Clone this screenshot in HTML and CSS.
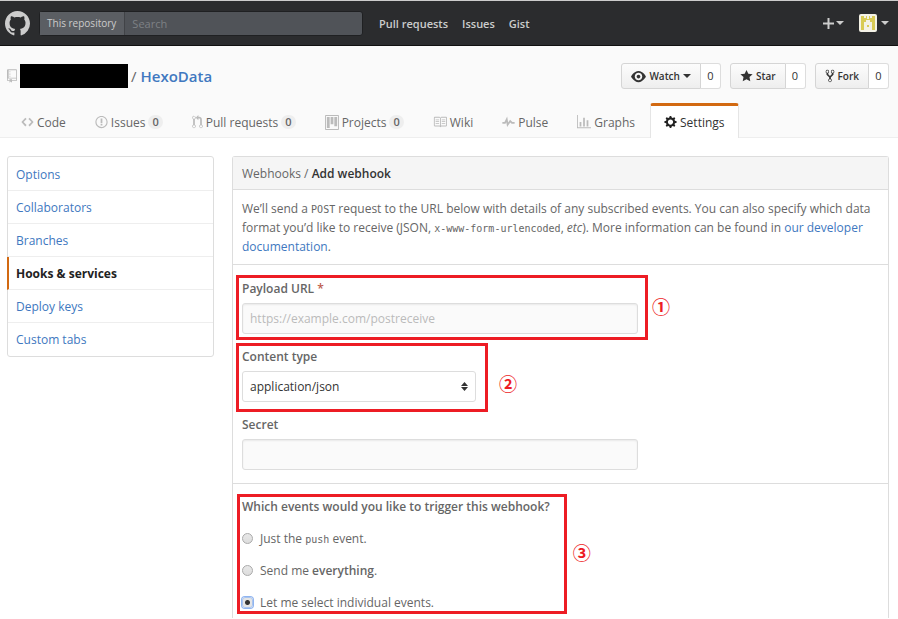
FILE: index.html
```html
<!DOCTYPE html>
<html lang="en">
<head>
<meta charset="utf-8">
<meta name="viewport" content="width=device-width, initial-scale=1">
<title>Add webhook</title>
<link rel="stylesheet" href="styles.css">
</head>
<body>
<header class="topbar">
  <a class="logo" href="#" aria-label="Homepage"><svg width="25" height="25" viewBox="0 0 16 16"><path d="M8 0C3.58 0 0 3.58 0 8c0 3.54 2.29 6.53 5.47 7.59.4.07.55-.17.55-.38 0-.19-.01-.82-.01-1.49-2.01.37-2.53-.49-2.69-.94-.09-.23-.48-.94-.82-1.13-.28-.15-.68-.52-.01-.53.63-.01 1.08.58 1.23.82.72 1.21 1.87.87 2.33.66.07-.52.28-.87.51-1.07-1.78-.2-3.64-.89-3.64-3.95 0-.87.31-1.59.82-2.15-.08-.2-.36-1.02.08-2.12 0 0 .67-.21 2.2.82.64-.18 1.32-.27 2-.27s1.36.09 2 .27c1.53-1.04 2.2-.82 2.2-.82.44 1.1.16 1.92.08 2.12.51.56.82 1.27.82 2.15 0 3.07-1.87 3.75-3.65 3.95.29.25.54.73.54 1.48 0 1.07-.01 1.93-.01 2.2 0 .21.15.46.55.38A8.01 8.01 0 0 0 16 8c0-4.42-3.58-8-8-8z"/></svg></a>
  <form class="search">
    <label for="q">This repository</label>
    <input id="q" type="text" placeholder="Search">
  </form>
  <nav class="topnav">
    <a href="#">Pull requests</a>
    <a href="#">Issues</a>
    <a href="#">Gist</a>
  </nav>
  <div class="usernav">
    <button type="button" aria-label="Create new"><svg width="11" height="11" viewBox="0 0 11 11"><path d="M4.500 0h2v4.500H11v2H6.500V11h-2V6.500H0v-2h4.500z"/></svg><span class="caret"></span></button>
    <button type="button" class="account" aria-label="Account"><svg width="18" height="18" viewBox="0 0 18 18"><rect width="18" height="18" rx="2" fill="#f4f2e6"/><path fill="#d9cb55" d="M2 2h3v2h2V2h1v3h2V2h1v2h2V2h3v14h-3V8h-2V6H7v2H5v8H2zM8 11h2v2H8z"/></svg><span class="caret"></span></button>
  </div>
</header>

<div class="pagehead">
  <div class="repo-row">
    <h1 class="repo">
      <svg width="10" height="14" viewBox="0 0 12 16"><path d="M4 9H3V8h1v1zm0-3H3v1h1V6zm0-2H3v1h1V4zm0-2H3v1h1V2zm8-1v12c0 .55-.45 1-1 1H6v2l-1.500-1.500L3 16v-2H1c-.55 0-1-.45-1-1V1c0-.55.45-1 1-1h10c.55 0 1 .45 1 1zm-1 10H1v2h2v-1h3v1h5v-2zm0-10H2v9h9V1z"/></svg>
      <span class="owner"></span>
      <span class="slash">/</span>
      <a href="#">HexoData</a>
    </h1>
    <div class="actions">
      <div class="pair"><button type="button"><svg width="15" height="15" viewBox="0 0 16 16"><path d="M8.060 2C3 2 0 8 0 8s3 6 8.060 6C13 14 16 8 16 8s-3-6-7.940-6zM8 12c-2.200 0-4-1.780-4-4 0-2.200 1.800-4 4-4 2.220 0 4 1.800 4 4 0 2.220-1.780 4-4 4zm2-4c0 1.110-.89 2-2 2-1.110 0-2-.89-2-2 0-1.110.89-2 2-2 1.110 0 2 .89 2 2z"/></svg>Watch<span class="caret"></span></button><a href="#">0</a></div>
      <div class="pair"><button type="button"><svg width="13" height="14" viewBox="0 0 14 16"><path d="M14 6l-4.900-.64L7 1 4.900 5.360 0 6l3.600 3.260L2.670 14 7 11.670 11.330 14l-.93-4.740z"/></svg>Star</button><a href="#">0</a></div>
      <div class="pair"><button type="button"><svg width="10" height="14" viewBox="0 0 10 16"><path d="M8 1a1.993 1.993 0 0 0-1 3.720V6L5 8 3 6V4.720A1.993 1.993 0 0 0 2 1a1.993 1.993 0 0 0-1 3.720V6.500l3 3v1.780A1.993 1.993 0 0 0 5 15a1.993 1.993 0 0 0 1-3.720V9.500l3-3V4.720A1.993 1.993 0 0 0 8 1zM2 4.200C1.340 4.200.8 3.650.8 3c0-.65.55-1.200 1.200-1.200.65 0 1.200.55 1.200 1.200 0 .65-.55 1.200-1.200 1.200zm3 10c-.66 0-1.200-.55-1.200-1.200 0-.65.55-1.200 1.200-1.200.65 0 1.200.55 1.200 1.200 0 .65-.55 1.200-1.200 1.200zm3-10c-.66 0-1.200-.55-1.200-1.200 0-.65.55-1.200 1.200-1.200.65 0 1.200.55 1.200 1.200 0 .65-.55 1.200-1.200 1.200z"/></svg>Fork</button><a href="#">0</a></div>
    </div>
  </div>
  <nav class="tabs">
    <a href="#"><svg width="13" height="14" viewBox="0 0 14 16"><path d="M9.500 3L8 4.500 11.500 8 8 11.500 9.500 13 14 8 9.500 3zm-5 0L0 8l4.500 5L6 11.500 2.500 8 6 4.500 4.500 3z"/></svg>Code</a>
    <a href="#"><svg width="13" height="14" viewBox="0 0 14 16"><path d="M7 2.300c3.140 0 5.700 2.560 5.700 5.700s-2.560 5.700-5.700 5.700A5.710 5.710 0 0 1 1.300 8c0-3.140 2.560-5.700 5.700-5.700zM7 1C3.140 1 0 4.140 0 8s3.140 7 7 7 7-3.140 7-7-3.140-7-7-7zm1 3H6v5h2V4zm0 6H6v2h2v-2z"/></svg>Issues<span class="count">0</span></a>
    <a href="#"><svg width="11" height="14" viewBox="0 0 12 16"><path d="M11 11.280V5c-.03-.78-.34-1.470-.94-2.060C9.460 2.350 8.780 2.030 8 2H7V0L4 3l3 3V4h1c.27.02.48.11.69.31.21.2.3.42.31.69v6.280A1.993 1.993 0 0 0 10 15a1.993 1.993 0 0 0 1-3.720zm-1 2.920c-.66 0-1.200-.55-1.200-1.200 0-.65.55-1.200 1.200-1.200.65 0 1.200.55 1.200 1.200 0 .65-.55 1.200-1.200 1.200zM4 3c0-1.110-.89-2-2-2a1.993 1.993 0 0 0-1 3.720v6.560A1.993 1.993 0 0 0 2 15a1.993 1.993 0 0 0 1-3.720V4.720c.59-.34 1-.98 1-1.720zm-.8 10c0 .66-.55 1.200-1.200 1.200-.65 0-1.200-.55-1.200-1.200 0-.65.55-1.200 1.200-1.200.65 0 1.200.55 1.200 1.200zM2 4.200C1.340 4.200.8 3.650.8 3c0-.65.55-1.200 1.200-1.200.65 0 1.200.55 1.200 1.200 0 .65-.55 1.200-1.200 1.200z"/></svg>Pull requests<span class="count">0</span></a>
    <a href="#"><svg width="14" height="15" viewBox="0 0 15 16"><path fill-rule="evenodd" d="M10 12h3V2h-3v10zm-4-2h3V2H6v8zm-4 4h3V2H2v12zm-1 1h13V1H1v14zM14 0H1a1 1 0 0 0-1 1v14a1 1 0 0 0 1 1h13a1 1 0 0 0 1-1V1a1 1 0 0 0-1-1z"/></svg>Projects<span class="count">0</span></a>
    <a href="#"><svg width="14" height="14" viewBox="0 0 16 16"><path d="M3 5h4v1H3V5zm0 3h4V7H3v1zm0 2h4V9H3v1zm11-5h-4v1h4V5zm0 2h-4v1h4V7zm0 2h-4v1h4V9zm2-6v9c0 .55-.45 1-1 1H9.500l-1 1-1-1H2c-.55 0-1-.45-1-1V3c0-.55.45-1 1-1h5.500l1 1 1-1H15c.55 0 1 .45 1 1zm-8 .5L7.500 3H2v9h6V3.500zm7-.5H9.500l-.5.500V12h6V3z"/></svg>Wiki</a>
    <a href="#"><svg width="13" height="14" viewBox="0 0 14 16"><path d="M11.500 8L8.800 5.400 6.600 8.500 5.500 1.600 2.380 8H0v2h3.600l.9-1.800.9 5.400L9 8.500l1.600 1.500H14V8z"/></svg>Pulse</a>
    <a href="#"><svg width="14" height="14" viewBox="0 0 16 16"><path d="M16 14v1H0V0h1v14h15zM5 13H3V8h2v5zm4 0H7V3h2v10zm4 0h-2V6h2v7z"/></svg>Graphs</a>
    <a href="#" class="selected" aria-current="page"><svg width="13" height="14" viewBox="0 0 14 16"><path d="M14 8.770v-1.600l-1.940-.64-.45-1.090.88-1.840-1.130-1.130-1.810.91-1.090-.45-.69-1.920h-1.600l-.63 1.940-1.110.45-1.840-.88-1.130 1.130.91 1.810-.45 1.090L0 7.230v1.590l1.940.64.45 1.090-.88 1.840 1.130 1.130 1.810-.91 1.090.45.69 1.920h1.590l.63-1.940 1.110-.45 1.840.88 1.130-1.130-.92-1.810.47-1.090L14 8.750v.02zM7 11c-1.660 0-3-1.340-3-3s1.340-3 3-3 3 1.340 3 3-1.340 3-3 3z"/></svg>Settings</a>
  </nav>
</div>

<div class="layout">
  <nav class="menu">
    <a href="#">Options</a>
    <a href="#">Collaborators</a>
    <a href="#">Branches</a>
    <a href="#" class="selected" aria-current="page">Hooks &amp; services</a>
    <a href="#">Deploy keys</a>
    <a href="#">Custom tabs</a>
  </nav>

  <main class="panel">
    <h2>Webhooks / <strong>Add webhook</strong></h2>
    <p class="intro">We’ll send a <code>POST</code> request to the URL below with details of any subscribed events. You can also specify which data format you’d like to receive (JSON, <code>x-www-form-urlencoded</code>, <em>etc</em>). More information can be found in <a href="#">our developer documentation</a>.</p>
    <form>
      <div class="fields">
        <div class="field">
          <label for="url">Payload URL <span class="required">*</span></label>
          <input id="url" type="text" placeholder="https://example.com/postreceive">
          <div class="callout"><span>①</span></div>
        </div>
        <div class="field short">
          <label for="type">Content type</label>
          <select id="type"><option>application/json</option></select>
          <div class="callout"><span>②</span></div>
        </div>
        <div class="field">
          <label for="secret">Secret</label>
          <input id="secret" type="text">
        </div>
      </div>
      <fieldset class="events">
        <legend>Which events would you like to trigger this webhook?</legend>
        <label><input type="radio" name="events"><span>Just the <code>push</code> event.</span></label>
        <label><input type="radio" name="events"><span>Send me <strong>everything</strong>.</span></label>
        <label><input type="radio" name="events" class="focused" checked><span>Let me select individual events.</span></label>
        <div class="callout"><span>③</span></div>
      </fieldset>
    </form>
  </main>
</div>
</body>
</html>
```

FILE: styles.css
```css
* {
  box-sizing: border-box;
}

body {
  margin: 0;
  background: #fff;
  color: #666;
  font: 12px/19px "Open Sans", "Noto Sans", sans-serif;
}

a {
  color: #4078c0;
  text-decoration: none;
}

button,
input,
select {
  font: inherit;
}

svg {
  display: block;
  flex: none;
  fill: currentColor;
}

code {
  font: 10px/12px "DejaVu Sans Mono", monospace;
}

strong {
  font-weight: 600;
}

.caret {
  border: 4px solid transparent;
  border-top-color: currentColor;
  border-bottom: 0;
}

/* Top bar */
.topbar {
  display: flex;
  align-items: center;
  height: 46px;
  padding: 0 9px 0 5px;
  border-top: 1px solid #ccc;
  border-bottom: 1px solid #111;
  background: #2b2c2e;
  color: #ccc;
}

.logo {
  color: #ccc;
}

.search {
  display: flex;
  flex: 0 1 324px;
  height: 25px;
  margin-left: 9px;
  border: 1px solid #1f2022;
  border-radius: 3px;
  background: #505358;
  line-height: 23px;
}

.search label {
  padding: 0 8px 0 7px;
  border-right: 1px solid #414347;
  background: #5b5e63;
  color: #ccc;
  font-size: 10px;
  white-space: nowrap;
}

.search input {
  flex: 1;
  min-width: 0;
  padding: 0 7px;
  border: 0;
  background: none;
  color: #ccc;
  font-size: 11px;
}

.search input::placeholder {
  color: #7e8185;
}

.topnav {
  display: flex;
  gap: 14px;
  margin-left: 16px;
}

.topnav a {
  color: #ccc;
  font-size: 11px;
  font-weight: 600;
}

.usernav {
  display: flex;
  gap: 15px;
  margin-left: auto;
}

.usernav button {
  display: flex;
  align-items: center;
  gap: 2px;
  padding: 0;
  border: 0;
  background: none;
  color: #ccc;
}

.usernav .account {
  gap: 4px;
}

/* Repository heading */
.pagehead {
  padding: 17px 9px 0 7px;
  border-bottom: 1px solid #eee;
  background: #fafafa;
}

.repo-row {
  display: flex;
  justify-content: space-between;
  height: 26px;
}

.repo {
  display: flex;
  align-items: center;
  margin: 0;
  color: #666;
  font-size: 15px;
  font-weight: 400;
}

.repo svg {
  color: #bbb;
}

.repo a {
  font-weight: 600;
}

.owner {
  width: 108px;
  height: 24px;
  margin: 0 3px;
  background: #000;
}

.slash {
  margin-right: 4px;
}

.actions {
  display: flex;
  gap: 9px;
}

.pair {
  display: flex;
  color: #333;
  font-size: 11px;
}

.pair button {
  display: flex;
  align-items: center;
  gap: 3px;
  padding: 0 9px;
  border: 1px solid #d5d5d5;
  border-radius: 3px 0 0 3px;
  background: linear-gradient(#fcfcfc, #eee);
  color: #333;
  font-size: 10px;
  font-weight: 600;
}

.pair a {
  width: 20px;
  border: 1px solid #ddd;
  border-left: 0;
  border-radius: 0 3px 3px 0;
  background: #fff;
  color: #333;
  line-height: 24px;
  text-align: center;
}

.tabs {
  display: flex;
  gap: 1px;
  margin: 14px 0 -1px;
}

.tabs a {
  display: flex;
  align-items: center;
  gap: 3px;
  height: 35px;
  padding: 0 13px;
  border: 1px solid transparent;
  border-top-width: 3px;
  border-bottom: 0;
  color: #666;
  white-space: nowrap;
}

.tabs svg {
  color: #bbb;
}

.tabs .selected {
  border-color: #d26911 #e5e5e5;
  border-radius: 3px 3px 0 0;
  background: #fff;
  color: #333;
}

.tabs .selected svg {
  color: #222;
}

.count {
  padding: 0 4px;
  border-radius: 8px;
  background: #eee;
  font-size: 11px;
  font-weight: 600;
  line-height: 14px;
}

/* Settings columns */
.layout {
  display: grid;
  grid-template-columns: 207px minmax(0, 1fr);
  align-items: start;
  gap: 18px;
  padding: 18px 9px 0 7px;
}

.menu {
  padding: 1px 0;
  border: 1px solid #ddd;
  border-radius: 3px;
  line-height: 18px;
}

.menu a {
  display: block;
  padding: 8px 8px 6px;
  border-bottom: 1px solid #eee;
}

.menu a:last-child {
  border-bottom: 0;
}

.menu .selected {
  margin-left: -1px;
  border-left: 2px solid #d26911;
  padding-left: 7px;
  color: #222;
  font-weight: 700;
}

.panel {
  border: 1px solid #ddd;
  border-bottom: 0;
  border-radius: 3px 3px 0 0;
}

.panel h2 {
  margin: 0;
  padding: 8px 9px 6px;
  border-bottom: 1px solid #ddd;
  background: #f5f5f5;
  font-size: 12px;
  font-weight: 400;
  line-height: 18px;
}

.panel h2 strong {
  color: #333;
}

.intro {
  margin: 0;
  padding: 9px 9px 8px;
  border-bottom: 1px solid #ddd;
}

.fields {
  display: grid;
  gap: 14px;
  padding: 15px 9px 13px;
  border-bottom: 1px solid #ddd;
}

.field {
  position: relative;
  display: grid;
  gap: 5px;
  width: 396px;
}

.field.short {
  width: 234px;
}

.field label {
  font-weight: 600;
  line-height: 18px;
}

.required {
  color: #bd5b4b;
}

.field input,
.field select {
  width: 100%;
  height: 31px;
  padding: 0 7px;
  border: 1px solid #ddd;
  border-radius: 3px;
  background: #fafafa;
  color: #333;
}

.field input {
  box-shadow: inset 0 1px 2px rgba(0, 0, 0, 0.07);
}

.field input::placeholder {
  color: #bbb;
}

.field select {
  appearance: none;
  background: #fff url("data:image/svg+xml,%3Csvg xmlns='http://www.w3.org/2000/svg' width='7' height='9' viewBox='0 0 7 9'%3E%3Cpath fill='%23333' d='M3.500 0L7 4H0zM0 5h7L3.500 9z'/%3E%3C/svg%3E") no-repeat right 7px center;
}

.events {
  position: relative;
  display: grid;
  justify-items: start;
  width: fit-content;
  margin: 0 9px;
  padding: 13px 0 6px;
  border: 0;
}

.events legend {
  float: left;
  padding: 0;
  font-weight: 600;
}

.events label {
  display: flex;
  align-items: center;
  gap: 7px;
  margin-top: 13px;
}

.events input {
  appearance: none;
  width: 11px;
  height: 11px;
  margin: 0;
  border: 1px solid #aaa;
  border-radius: 50%;
  background: linear-gradient(#e8e8e8, #ddd);
}

.events input:checked {
  background: radial-gradient(#333 2px, #e5e5e5 3px);
}

/* Square focus halo behind the round button */
.events .focused {
  box-shadow: 0 0 0 1px #8fb4f0;
  border-radius: 3px;
  border-color: #a9c4ee;
}

/* Numbered callouts laid over the form */
.callout {
  position: absolute;
  inset: -5px -10px -6px -6px;
  border: 3px solid #ed1c24;
  pointer-events: none;
}

.short .callout {
  right: -12px;
  bottom: -10px;
}

.events .callout {
  top: 10px;
  right: -17px;
  bottom: 4px;
  left: -5px;
}

.callout span {
  position: absolute;
  top: 50%;
  left: 100%;
  margin: -14px 0 0 7px;
  color: #ed1c24;
  font: 700 18px/24px "Noto Sans CJK JP", sans-serif;
}

.short .callout span {
  margin: -7px 0 0 14px;
}

.events .callout span {
  margin-left: 9px;
}
```
